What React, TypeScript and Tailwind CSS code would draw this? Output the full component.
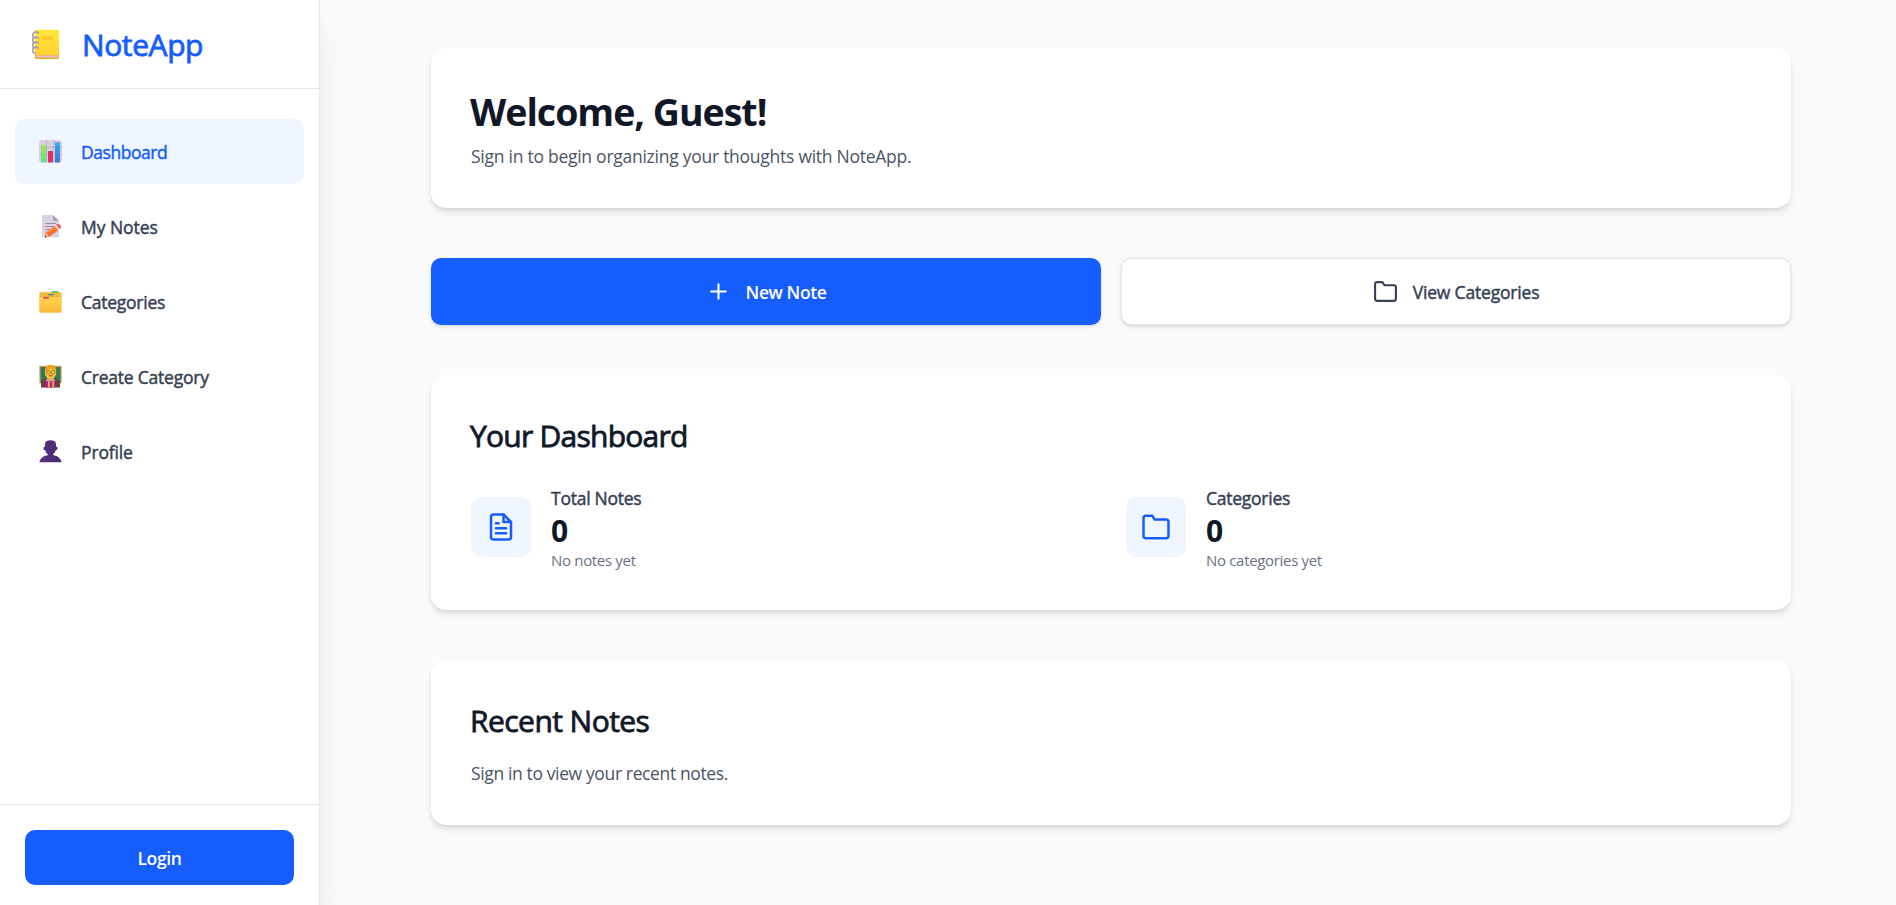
import React from "react";
import { FiFileText, FiFolder, FiPlus } from "react-icons/fi";

function NotebookIcon() {
  return (
    <svg width="28" height="31" viewBox="0 0 28 31" className="shrink-0">
      <defs>
        <linearGradient id="nb" x1="0" y1="0" x2="0" y2="1">
          <stop offset="0" stopColor="#ffe83a" />
          <stop offset="1" stopColor="#ffd02e" />
        </linearGradient>
      </defs>
      <rect x="3" y="1" width="24" height="29" rx="1" fill="#e8b02a" />
      <rect x="4" y="26.5" width="22.5" height="2" rx="1" fill="#e6bfd6" />
      <path d="M4 .8h22a1 1 0 0 1 1 1V26H3V1.8a1 1 0 0 1 1-1z" fill="url(#nb)" />
      <rect x="9.5" y="7" width="11.5" height="4" rx=".8" fill="#ffc533" />
      {[3, 8, 13, 18].map((y) => (
        <path key={y} d={`M6.3 ${y + 1.3}C5.500 ${y - 0.8} 2 ${y - 0.8} 1 ${y + 2}S1.600 ${y + 6} 3 ${y + 6}`} fill="none" stroke="#aaa0af" strokeWidth="1.8" strokeLinecap="round" />
      ))}
    </svg>
  );
}

function ChartIcon() {
  return (
    <svg width="23" height="23" viewBox="0 0 23 23">
      <defs>
        <linearGradient id="cg" x1="0" y1="0" x2="0" y2="1">
          <stop offset="0" stopColor="#a4e055" />
          <stop offset="1" stopColor="#5bea8d" />
        </linearGradient>
        <linearGradient id="cb" x1="0" y1="0" x2="0" y2="1">
          <stop offset="0" stopColor="#35a9f5" />
          <stop offset="1" stopColor="#3b7dce" />
        </linearGradient>
      </defs>
      <rect width="23" height="22.5" rx="2.5" fill="#d8d0e0" />
      <path d="M7.5 0v22M15 0v22M0 7.3h23M0 14.8h23" stroke="#b9b1c2" strokeWidth="1" />
      <rect x="2" y="5" width="5" height="17.5" rx=".6" fill="url(#cg)" />
      <rect x="9" y="11" width="5" height="11.5" rx=".6" fill="#dc2f6e" />
      <rect x="16" y="2.2" width="5" height="20.3" rx=".6" fill="url(#cb)" />
    </svg>
  );
}

function MemoIcon() {
  return (
    <svg width="23" height="23" viewBox="0 0 23 23">
      <path d="M3 0h11l6 6v16.300H3z" fill="#dad3e3" />
      <path d="M14 0l6 6h-5a1 1 0 0 1-1-1z" fill="#aaa3b4" />
      <path d="M6 8.500h11M6 11.500h11M6 14.500h8" stroke="#998fa5" strokeWidth="1.100" />
      <path d="M6.500 17.500L16 10.500l3.500 4.500-9.500 6.800-4 .6z" fill="#fb8a35" />
      <path d="M8 19l9.500-7 2 3-9.500 6.700z" fill="#f5702f" />
      <path d="M6.500 17.500l3.500 4.200-4 .8z" fill="#efb58c" />
      <path d="M6.300 20.300l1.400 1.800-2 .4z" fill="#6b4050" />
      <path d="M15.500 10.800l1.600-1.200 3.500 4.500-1.600 1.200z" fill="#e5dce8" />
      <path d="M17.100 9.600c1.400-1 2.700-1 4 .4 1.300 1.500 1.200 2.900-.5 4.100z" fill="#f8524f" />
    </svg>
  );
}

function DividersIcon() {
  return (
    <svg width="23" height="23" viewBox="0 0 23 23">
      <defs>
        <linearGradient id="fd" x1="0" y1="0" x2="0" y2="1">
          <stop offset="0" stopColor="#ffd34f" />
          <stop offset="1" stopColor="#fcb93a" />
        </linearGradient>
      </defs>
      <path d="M1.500 2.300H12l1-1.300h6l1 1.300h1.500a1 1 0 0 1 1 1V12H.5V3.300a1 1 0 0 1 1-1z" fill="#f6b536" />
      <rect x="13" y="1" width="6" height="1.700" rx=".6" fill="#45cf7c" />
      <path d="M1 5h7l1-1h6l1 1h6v8H1z" fill="#ffca45" />
      <rect x="9" y="4" width="6" height="1.500" rx=".6" fill="#4388bd" />
      <path d="M1 7h21v-1.500H1z" fill="#efad35" />
      <path d="M.3 8.500q0-1.500 1.500-1.500h19.400q1.500 0 1.500 1.500v12.500q0 1.700-1.700 1.700H2q-1.700 0-1.700-1.700z" fill="url(#fd)" />
      <rect x="4" y="7" width="6" height="1.700" rx=".6" fill="#f33c66" />
    </svg>
  );
}

function TeacherIcon() {
  return (
    <svg width="23" height="23" viewBox="0 0 23 23">
      <rect x=".4" y=".8" width="22.200" height="17.500" fill="#c99a62" />
      <rect x="1.600" y="2" width="19.800" height="16" fill="#317a5c" />
      <path d="M2 22.500v-4c0-3 2-4.500 5-4.500h9c3 0 5 1.500 5 4.500v4z" fill="#6b3f43" />
      <path d="M8 12h7v4.500H8z" fill="#eea52e" />
      <path d="M6 7.500C6 2.500 8-.2 11.500-.2S17.200 2.500 17.200 7.500c0 3.500-2.200 6-5.700 6S6 11 6 7.500z" fill="#ffc83a" />
      <path d="M5.800 6.500C5.600 2 8 -.3 11.500-.3s6 2.300 5.800 6.800C15.500 4.500 13.500 4 12 3.800 10 4 7.500 4.500 5.800 6.500z" fill="#eca515" />
      <circle cx="9.200" cy="7.300" r="1.900" fill="none" stroke="#926a24" strokeWidth=".8" />
      <circle cx="14" cy="7.300" r="1.900" fill="none" stroke="#926a24" strokeWidth=".8" />
      <path d="M10 10.800h3.300" stroke="#d92c4d" strokeWidth="1.200" />
      <path d="M7 14.500h9v2H7z" fill="#b9a8bd" />
      <path d="M7 16.500h9v6H7z" fill="#c41b8b" />
      <path d="M9 16.500h1.700v6H9zM13.500 16.500H15v6h-1.500z" fill="#f1bd46" />
    </svg>
  );
}

function PersonIcon() {
  return (
    <svg width="23" height="23" viewBox="0 0 23 23">
      <defs>
        <linearGradient id="pp" x1="0" y1="0" x2="1" y2="0">
          <stop offset="0" stopColor="#583184" />
          <stop offset="1" stopColor="#432970" />
        </linearGradient>
      </defs>
      <path d="M6 4.500C6 1.500 8 .2 11.500.2S17 1.500 17 4.500v2c1.200 0 1.600.8 1.500 1.800-.1 1.200-.8 1.900-1.800 1.900-.5 1.800-1.500 3.200-2.700 4v.7c4.500.8 8 3.200 8.500 7.400H.5C1 18.300 4.500 15.900 9 15.100v-.7c-1.200-.8-2.200-2.200-2.700-4-1 0-1.700-.7-1.800-1.900-.1-1.200.3-2 1.500-2z" fill="url(#pp)" />
    </svg>
  );
}

const navItems = [
  { label: "Dashboard", icon: <ChartIcon />, active: true, tracking: "tracking-[-0.45px]" },
  { label: "My Notes", icon: <MemoIcon />, active: false, tracking: "tracking-[-0.05px]" },
  { label: "Categories", icon: <DividersIcon />, active: false, tracking: "tracking-[-0.25px]" },
  { label: "Create Category", icon: <TeacherIcon />, active: false, tracking: "tracking-[-0.22px]" },
  { label: "Profile", icon: <PersonIcon />, active: false, tracking: "tracking-[-0.15px]" },
];

const card =
  "rounded-[15px] bg-white p-10 shadow-[0_5px_7.5px_-1.250px_rgba(0,0,0,0.1),0_2.500px_5px_-2.500px_rgba(0,0,0,0.1)]";

const medium = "[-webkit-text-stroke:0.45px_currentColor]";
const mediumLarge = "[-webkit-text-stroke:0.8px_currentColor]";

function Stat({ icon, label, hint }: { icon: React.ReactNode; label: string; hint: string }) {
  return (
    <div className="flex items-center gap-5">
      <div className="mb-px flex size-[60px] items-center justify-center rounded-[10px] bg-[#eff6ff] text-[#155dfc]">{icon}</div>
      <div>
        <p className={`pt-px text-[17.5px] leading-[25px] tracking-[-0.25px] text-[#364153] ${medium}`}>{label}</p>
        <p className="text-[30px] leading-[40px] font-bold">0</p>
        <p className="-mt-px text-[15px] leading-[20px] tracking-[-0.32px] text-[#6a7282]">{hint}</p>
      </div>
    </div>
  );
}

export default function App() {
  return (
    <div className="flex h-[905px] overflow-hidden bg-[#f9fafb] font-['Open_Sans','Noto_Sans',sans-serif] text-[#101828]">
      <aside className="z-10 flex w-[320px] shrink-0 flex-col border-r border-[#e5e7eb] bg-white shadow-[0_25px_31px_-6px_rgba(0,0,0,0.1),0_10px_12px_-7px_rgba(0,0,0,0.1)]">
        <header className="flex h-[89px] items-center gap-[22px] border-b border-[#e5e7eb] pl-8">
          <NotebookIcon />
          <span className={`pt-px text-[30px] leading-[38px] tracking-[-0.4px] text-[#155dfc] ${mediumLarge}`}>NoteApp</span>
        </header>
        <nav className="flex flex-1 flex-col gap-[10px] px-[15px] pt-[30px]">
          {navItems.map((item) => (
            <a
              key={item.label}
              className={`flex h-[65px] w-[289px] items-center gap-[19px] rounded-[10px] pl-6 text-[17.5px] leading-[25px] ${medium} ${item.tracking} ${
                item.active ? "bg-[#eff6ff] text-[#155dfc]" : "text-[#364153]"
              }`}
            >
              {item.icon}
              <span className="pt-[2px]">{item.label}</span>
            </a>
          ))}
        </nav>
        <footer className="border-t border-[#e5e7eb] px-[25px] pt-[25px] pb-5">
          <button className="h-[55px] w-full rounded-[10px] bg-[#155dfc] pt-[2px] text-[17.5px] font-semibold tracking-[-0.35px] text-white">Login</button>
        </footer>
      </aside>
      <main className="flex-1 pt-12 pl-[111px]">
        <div className="flex w-[1360px] flex-col gap-[50px]">
          <section className={`${card} h-[160px]`}>
            <h1 className="-ml-px pt-px text-[37.5px] leading-[45px] font-bold tracking-[-1px]">Welcome, Guest!</h1>
            <p className="mt-[10px] text-[17.5px] leading-[25px] tracking-[-0.26px] text-[#4a5565]">
              Sign in to begin organizing your thoughts with NoteApp.
            </p>
          </section>
          <div className="grid grid-cols-2 gap-5 text-[17.5px] leading-[25px]">
            <button className="flex h-[67px] items-center justify-center gap-[15px] rounded-[10px] bg-[#155dfc] font-semibold tracking-[-0.4px] text-white shadow-[0_1.250px_3.750px_rgba(0,0,0,0.1),0_1.250px_2.500px_-1.250px_rgba(0,0,0,0.1)]">
              <FiPlus size={25} />
              <span className="pt-[2px]">New Note</span>
            </button>
            <button className="flex h-[67px] items-center justify-center gap-[15px] rounded-[10px] border border-[#e5e7eb] bg-white tracking-[-0.18px] text-[#364153] shadow-[0_1.250px_3.750px_rgba(0,0,0,0.1),0_1.250px_2.500px_-1.250px_rgba(0,0,0,0.1)]">
              <FiFolder size={25} />
              <span className={`pt-[2px] ${medium}`}>View Categories</span>
            </button>
          </div>
          <section className={`${card} h-[235px]`}>
            <h2 className={`-ml-px pt-px text-[30px] leading-[40px] tracking-[-0.75px] ${mediumLarge}`}>Your Dashboard</h2>
            <div className="mt-[29px] grid grid-cols-2 gap-[30px]">
              <Stat icon={<FiFileText size={30} />} label="Total Notes" hint="No notes yet" />
              <Stat icon={<FiFolder size={30} />} label="Categories" hint="No categories yet" />
            </div>
          </section>
          <section className={`${card} h-[165px]`}>
            <h2 className={`-ml-px pt-px text-[30px] leading-[40px] tracking-[-0.55px] ${mediumLarge}`}>Recent Notes</h2>
            <p className="mt-5 text-[17.5px] leading-[25px] tracking-[-0.37px] text-[#4a5565]">Sign in to view your recent notes.</p>
          </section>
        </div>
      </main>
    </div>
  );
}
